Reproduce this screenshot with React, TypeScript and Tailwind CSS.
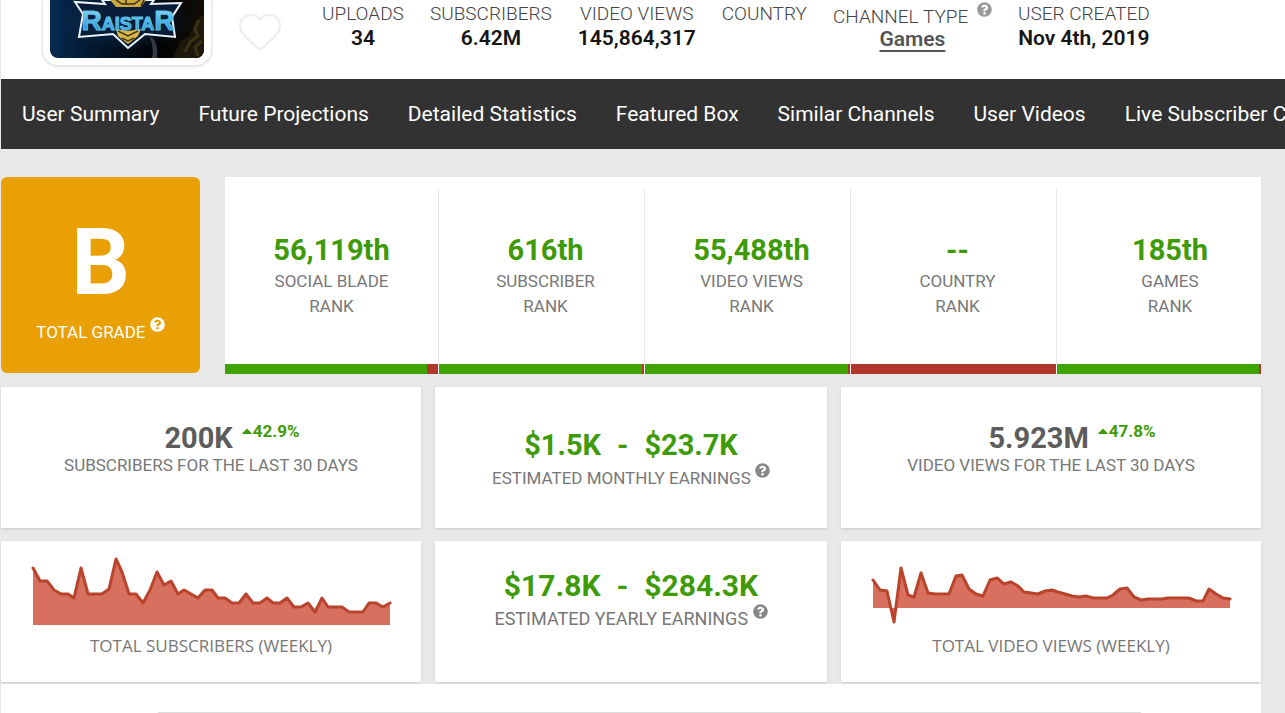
import { Heart } from "lucide-react";
import { FaCaretUp, FaQuestionCircle } from "react-icons/fa";

type Rank = { value: string; label: string; red: number };
type ChartProps = { points: number[][]; base: number; label: string };

const navItems = [
  "User Summary",
  "Future Projections",
  "Detailed Statistics",
  "Featured Box",
  "Similar Channels",
  "User Videos",
  "Live Subscriber Count",
];

const ranks: Rank[] = [
  { value: "56,119th", label: "Social Blade", red: 5 },
  { value: "616th", label: "Subscriber", red: 1 },
  { value: "55,488th", label: "Video Views", red: 1 },
  { value: "--", label: "Country", red: 100 },
  { value: "185th", label: "Games", red: 1 },
];

const subscribers = [
  [2, 15], [9, 28], [16, 28], [23, 37], [30, 41], [37, 41], [43, 45], [50, 15],
  [57, 41], [64, 41], [71, 41], [78, 36], [85, 6], [91, 19], [98, 41], [105, 41],
  [112, 50], [119, 37], [126, 19], [133, 32], [140, 28], [147, 41], [153, 37],
  [160, 41], [167, 45], [174, 37], [181, 37], [187, 45], [194, 45], [201, 50],
  [208, 50], [215, 41], [222, 50], [229, 50], [236, 45], [242, 50], [249, 50],
  [256, 45], [263, 54], [270, 54], [277, 50], [284, 59], [291, 45], [297, 54],
  [304, 54], [311, 54], [318, 59], [325, 59], [332, 59], [338, 50], [345, 50],
  [352, 54], [359, 50],
];

const views = [
  [2, 27], [9, 37], [16, 38], [23, 69], [30, 15], [37, 42], [43, 44], [50, 20],
  [57, 40], [64, 41], [71, 41], [78, 41], [85, 23], [91, 22], [98, 36], [105, 41],
  [112, 43], [119, 27], [126, 25], [133, 31], [140, 29], [147, 33], [153, 39],
  [160, 40], [167, 41], [174, 38], [181, 37], [187, 39], [194, 41], [201, 43],
  [208, 44], [215, 43], [222, 45], [229, 45], [236, 45], [242, 42], [249, 36],
  [256, 35], [263, 44], [270, 47], [277, 46], [284, 46], [291, 46], [297, 45],
  [304, 45], [311, 45], [318, 45], [325, 48], [332, 48], [338, 36], [345, 41],
  [352, 45], [359, 46],
];

function HelpIcon({ className = "" }: { className?: string }) {
  return (
    <FaQuestionCircle
      aria-hidden="true"
      className={`mb-1.5 inline-block size-[15px] align-baseline ${className}`}
    />
  );
}

function Avatar() {
  return (
    <div className="h-[66px] w-[170px] shrink-0 rounded-b-2xl border border-t-0 border-gray-200 bg-white px-[7px] pb-[7px] shadow-sm">
      <svg viewBox="0 0 154 58" role="img" aria-label="Raistar" className="h-[58px] w-[154px] rounded-b-lg">
        <defs>
          <linearGradient id="night" x1="0" x2="1">
            <stop offset="0" stopColor="#062b52" />
            <stop offset="0.35" stopColor="#041426" />
            <stop offset="0.7" stopColor="#020304" />
            <stop offset="1" stopColor="#100d05" />
          </linearGradient>
          <radialGradient id="halo">
            <stop offset="0" stopColor="#1674b5" />
            <stop offset="1" stopColor="#05264a" stopOpacity="0" />
          </radialGradient>
          <linearGradient id="ice" x1="0" x2="0" y1="0" y2="1">
            <stop offset="0" stopColor="#9fe5fb" />
            <stop offset="0.5" stopColor="#4cb4e4" />
            <stop offset="1" stopColor="#2585c4" />
          </linearGradient>
        </defs>
        <rect width="154" height="58" fill="url(#night)" />
        <path d="M154 14L145 21L139 36L130 42L123 58H154Z" fill="#1d180b" />
        <path d="M149 20l-4 9 3 7-8 6-5 10M152 41l-7 6 3 9" fill="none" stroke="#3d3114" strokeWidth="3" />
        <ellipse cx="77" cy="20" rx="66" ry="32" fill="url(#halo)" opacity="0.7" />
        <path d="M100 38q4 9 2 20h5q2-12-5-21z" fill="#343a41" />
        <path d="M52 0L55 4L25 2L33 14L29 37L63 34L78 48L95 34L125 37L122 17L131 3L101 4L104 0Z" fill="#071d38" stroke="#eef5fa" strokeWidth="2" />
        <path d="M60 0h36l-5 7H66z" fill="#ccaa42" />
        <path d="M66 0l6 4h12l6-4M76 0v4M94 0l-3 6" fill="none" stroke="#3c2d10" strokeWidth="1.5" />
        <path d="M66 29l12 2 13-2-3 7-10 8-10-8z" fill="#d9b84b" />
        <path d="M68 31l10 5 10-5M72 38l6 3 6-3" fill="none" stroke="#49360e" strokeWidth="1.5" />
        <text x="78" y="30" textAnchor="middle" fontFamily="Liberation Sans, sans-serif" fontWeight="700" fontSize="28" fill="url(#ice)" stroke="#5cc0ea" strokeWidth="1">
          R<tspan fontSize="18">AISTA</tspan>R
        </text>
      </svg>
    </div>
  );
}

function Stat({ label, value }: { label: string; value?: string }) {
  return (
    <div className="text-center">
      <dt className="text-[19px]/6 font-light text-[#444] uppercase">{label}</dt>
      <dd className="text-[21px]/6 font-semibold text-[#151515]">{value}</dd>
    </div>
  );
}

function RankCell({ rank }: { rank: Rank }) {
  return (
    <div className="group flex flex-col">
      <div className="mt-3 flex-1 border-r border-[#e8e8eb] pt-[43px] pl-2 text-center group-first:pl-0 group-last:border-0 group-last:pl-[22px]">
        <div className="text-[29px]/9 font-bold text-[#3f9a08]">{rank.value}</div>
        <div className="pt-px text-[17px]/[25px] text-[#777] uppercase">
          {rank.label}
          <br />
          Rank
        </div>
      </div>
      <div className="mr-px flex h-[10px] bg-[#40a400] group-last:mr-0">
        <div className="ml-auto bg-[#b2372b]" style={{ width: `${rank.red}%` }} />
      </div>
    </div>
  );
}

function Growth({ value, change, label }: { value: string; change: string; label: string }) {
  return (
    <section className="h-[141px] bg-white pt-8 text-center shadow-sm">
      <div className="flex justify-center gap-1.5 pl-[42px] font-bold">
        <span className="text-[29px]/[38px] text-[#5c5c5c]">{value}</span>
        <span className="flex items-center self-start text-[17px]/6 text-[#3f9a08]">
          <FaCaretUp aria-hidden="true" className="-mr-0.5 size-4" />
          {change}
        </span>
      </div>
      <p className="text-[17px]/4 text-[#777] uppercase">{label}</p>
    </section>
  );
}

function WeeklyChart({ points, base, label }: ChartProps) {
  const line = points.map((p) => p.join(",")).join(" ");
  return (
    <section className="h-[141px] bg-white pt-3 text-center shadow-sm">
      <svg viewBox="0 0 361 74" aria-hidden="true" className="mx-auto h-[74px] w-[361px]">
        <polygon points={`2,${base} ${line} 359,${base}`} fill="#d7705f" />
        <polyline points={line} fill="none" stroke="#b9432b" strokeWidth="3" strokeLinejoin="round" strokeLinecap="round" />
      </svg>
      <p className="pt-[7px] font-['Open_Sans',sans-serif] text-[17px]/6 text-[#777] uppercase">{label}</p>
    </section>
  );
}

export default function App() {
  return (
    <div className="min-h-screen overflow-hidden bg-[#e8e8eb] pl-px font-[Roboto,sans-serif]">
      <header className="flex h-[79px] bg-white pl-[41px]">
        <Avatar />
        <button type="button" aria-label="Add to favorites" className="ml-6 h-[62px] shrink-0 text-[#efefef]">
          <Heart className="size-12" strokeWidth={1.25} />
        </button>
        <dl className="ml-[38px] flex gap-[26px] pt-0.5 whitespace-nowrap">
          <Stat label="Uploads" value="34" />
          <Stat label="Subscribers" value="6.42M" />
          <Stat label="Video Views" value="145,864,317" />
          <Stat label="Country" />
          <div className="text-center">
            <dt className="text-[19px]/6 font-light text-[#444] uppercase">
              Channel Type <HelpIcon className="ml-1 text-[#999]" />
            </dt>
            <dd className="text-[21px]/5 font-semibold text-[#555]">
              <a href="#games" className="underline decoration-2 underline-offset-4">Games</a>
            </dd>
          </div>
          <Stat label="User Created" value="Nov 4th, 2019" />
        </dl>
      </header>

      <nav className="flex h-[70px] items-center gap-[39px] overflow-hidden bg-[#323232] px-[21px] pt-0.5 text-[21px] whitespace-nowrap text-white">
        {navItems.map((item) => (
          <a key={item} href="#">{item}</a>
        ))}
      </nav>

      <main className="pt-7 pr-6">
        <div className="flex gap-[25px]">
          <section className="h-[196px] w-[199px] shrink-0 rounded-md bg-[#e9a004] pt-8 text-center text-white">
            <div className="text-[92px]/[108px] font-bold">B</div>
            <p className="text-[17px]/6 uppercase">
              Total Grade <HelpIcon />
            </p>
          </section>
          <section className="grid h-[197px] flex-1 grid-cols-[214fr_206fr_206fr_206fr_204fr] bg-white">
            {ranks.map((rank) => (
              <RankCell key={rank.label} rank={rank} />
            ))}
          </section>
        </div>

        <div className="mt-[13px] grid grid-cols-[420fr_392fr_420fr] gap-x-[14px] gap-y-[13px]">
          <Growth value="200K" change="42.9%" label="Subscribers for the last 30 days" />
          <section className="h-[141px] bg-white pt-10 text-center shadow-sm">
            <div className="flex justify-center gap-4 text-[29px]/9 font-bold text-[#3f9a08]">
              <span>$1.5K</span>
              <span>-</span>
              <span>$23.7K</span>
            </div>
            <p className="text-[17px]/6 text-[#777] uppercase">
              Estimated monthly earnings <HelpIcon className="text-[#888]" />
            </p>
          </section>
          <Growth value="5.923M" change="47.8%" label="Video views for the last 30 days" />

          <WeeklyChart points={subscribers} base={72} label="Total Subscribers (Weekly)" />
          <section className="h-[141px] bg-white pt-[27px] text-center shadow-sm">
            <div className="flex justify-center gap-4 text-3xl/9 font-bold text-[#3f9a08]">
              <span>$17.8K</span>
              <span>-</span>
              <span>$284.3K</span>
            </div>
            <p className="text-lg/6 text-[#777] uppercase">
              Estimated yearly earnings <HelpIcon className="text-[#888]" />
            </p>
          </section>
          <WeeklyChart points={views} base={55} label="Total Video Views (Weekly)" />
        </div>

        <section className="mt-0.5 h-8 bg-white pt-7">
          <div className="mr-[120px] ml-[157px] h-px bg-[#ddd]" />
        </section>
      </main>
    </div>
  );
}
